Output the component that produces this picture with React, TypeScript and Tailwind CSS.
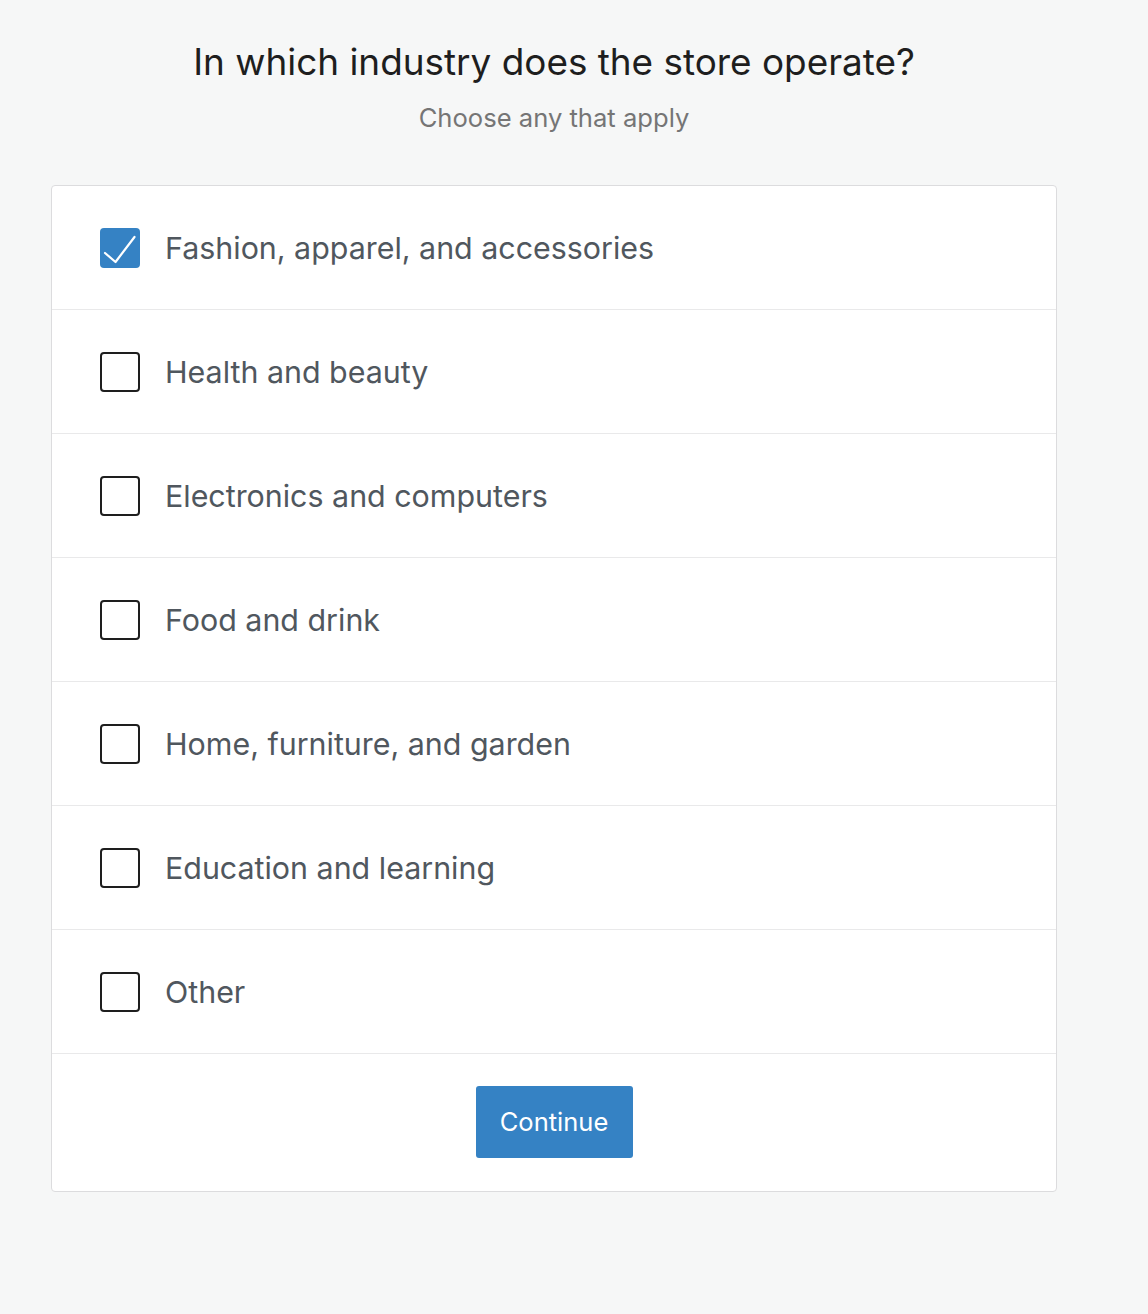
import { useState } from 'react';

const OPTIONS = [
  'Fashion, apparel, and accessories',
  'Health and beauty',
  'Electronics and computers',
  'Food and drink',
  'Home, furniture, and garden',
  'Education and learning',
  'Other',
];

export default function App() {
  const [checked, setChecked] = useState<string[]>([OPTIONS[0]]);

  function toggle(opt: string) {
    setChecked((prev) =>
      prev.includes(opt) ? prev.filter((o) => o !== opt) : [...prev, opt]
    );
  }

  return (
    <div className="min-h-[1314px] w-[1148px] bg-[#f6f7f7] font-['Inter',sans-serif] pt-[39px]">
      <div className="ml-[51px] w-[1006px]">
        <h1 className="text-center text-[36.9px] leading-[46px] text-[#1e1e1e]">
          In which industry does the store operate?
        </h1>
        <p className="mt-[17px] text-center text-[25.6px] leading-[32px] text-[#757575]">
          Choose any that apply
        </p>

        <div className="mt-[51px] bg-white border border-[#dcdcde] rounded-[4px]">
          {OPTIONS.map((opt) => {
            const isOn = checked.includes(opt);
            return (
              <label
                key={opt}
                className="flex items-center h-[124px] border-b border-[#e9e9ea] pl-[48px] cursor-pointer"
              >
                <input
                  type="checkbox"
                  className="sr-only"
                  checked={isOn}
                  onChange={() => toggle(opt)}
                />
                {isOn ? (
                  <span className="w-[40px] h-[40px] rounded-[4px] bg-[#3582c4]">
                    <svg width="40" height="40" viewBox="0 0 40 40" fill="none">
                      <path
                        d="M5 25 L15.5 34 L34.5 9"
                        stroke="white"
                        strokeWidth="2.2"
                        strokeLinecap="round"
                        strokeLinejoin="round"
                      />
                    </svg>
                  </span>
                ) : (
                  <span className="w-[40px] h-[40px] rounded-[4px] border-2 border-[#1e1e1e] bg-white" />
                )}
                <span className="ml-[25px] pt-[3px] text-[30.4px] text-[#50575e]">
                  {opt}
                </span>
              </label>
            );
          })}
          <div className="flex justify-center h-[137px] pt-[32px]">
            <button
              type="button"
              className="h-[72px] w-[157px] rounded-[3px] bg-[#3582c4] text-white text-[25.5px]"
            >
              Continue
            </button>
          </div>
        </div>
      </div>
    </div>
  );
}
